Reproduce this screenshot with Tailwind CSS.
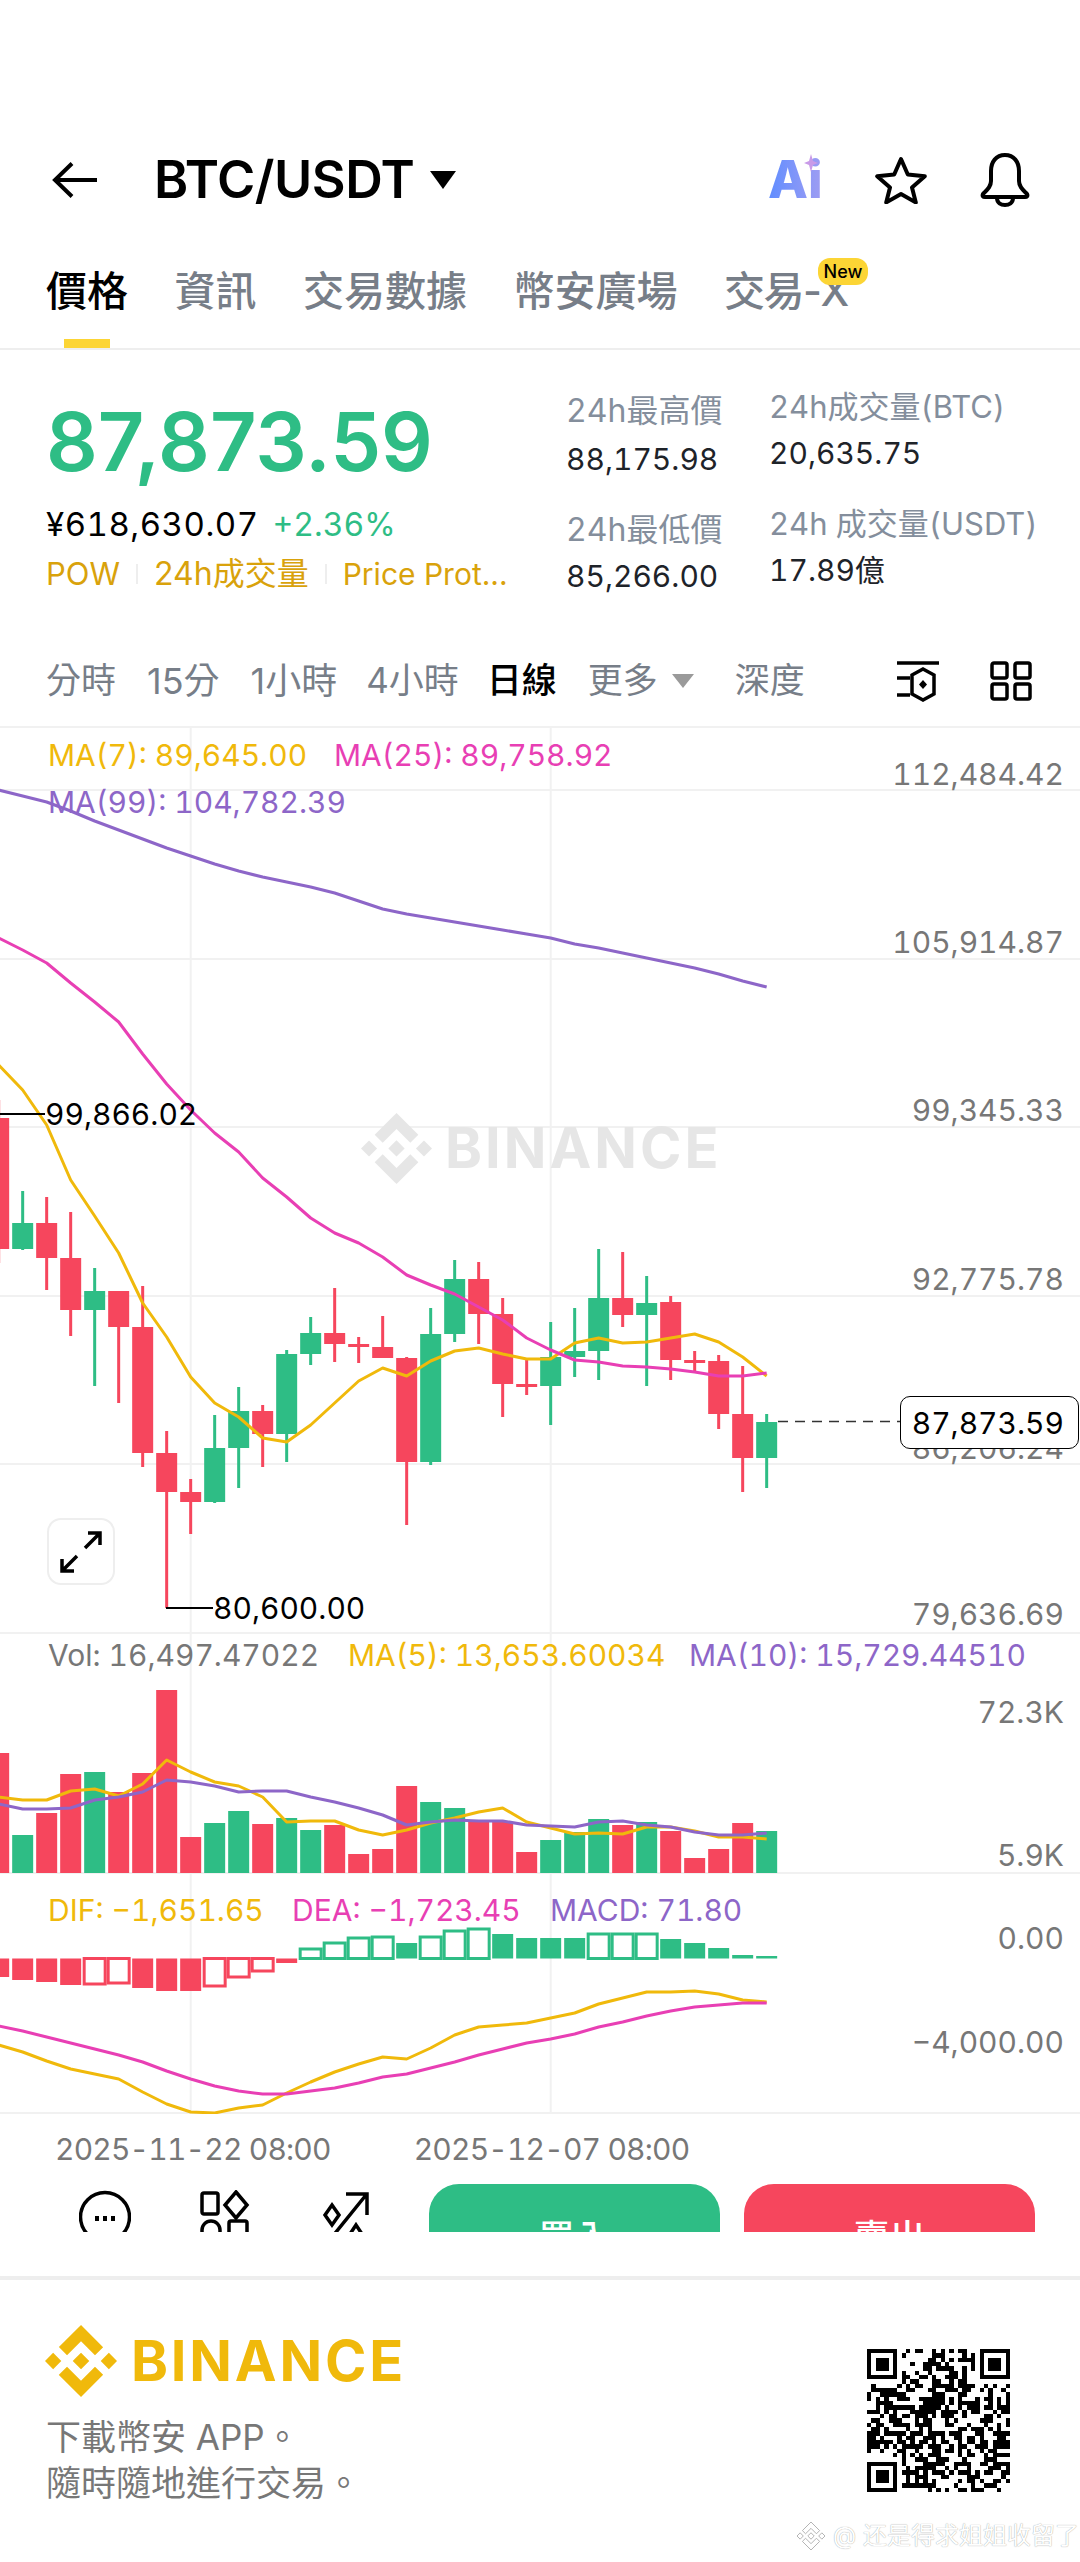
<!DOCTYPE html>
<html lang="zh-Hant">
<head>
    <meta charset="UTF-8">
    <meta name="viewport" content="width=device-width, initial-scale=1.0">
    <title>BTC/USDT</title>
    <script src="https://cdn.jsdelivr.net/npm/@tailwindcss/browser@4"></script>
</head>
<body class="bg-white">
<div class="w-[1080px] h-[2562px] relative overflow-hidden bg-white text-[#1e2329] font-[Inter,'Noto_Sans_CJK_TC',sans-serif]">

    <!-- Header -->
    <div class="h-[80px] mt-[140px] flex items-center pl-[52px]">
        <svg width="46" height="36" viewBox="0 0 46 36" fill="none" stroke="#000" stroke-width="4"><path d="M45 18H4M20 1.500L3 18l17 16.500"/></svg>
        <div class="ml-[56px] w-[258px] text-[52px] leading-[60px] font-semibold tracking-[-0.5px] text-black whitespace-nowrap">BTC/USDT</div>
        <svg class="ml-[17px]" width="28" height="18" viewBox="0 0 28 18"><path d="M1 0h26L14 18z" fill="#000"/></svg>
        <div class="relative ml-[311px] w-[54px] h-[44px]">
            <span class="absolute left-0 top-[-8px] text-[52px] leading-[60px] font-extrabold bg-linear-to-r from-[#5f8dff] to-[#9f9df2] bg-clip-text text-transparent">Ai</span>
            <svg class="absolute left-[36px] top-[-4px]" width="14" height="18" viewBox="0 0 14 18"><path d="M7 0l2 7 5 2-5 2-2 7-2-7-5-2 5-2z" fill="#c99be8"/></svg>
        </div>
        <svg class="ml-[53px]" width="52" height="48" viewBox="0 0 52 48" fill="none" stroke="#000" stroke-width="4" stroke-linejoin="round"><path d="M26 3l6.800 15.500 17 1.700-12.800 11.200 3.800 15-14.800-8.400-14.800 8.400 3.800-15L2.200 20.200l17-1.700z"/></svg>
        <svg class="ml-[52px]" width="52" height="54" viewBox="0 0 52 54" fill="none" stroke="#000" stroke-width="4" stroke-linejoin="round"><path d="M26 2c-9 0-14 7-14 16v10c0 6-4 9-8 13-1 2 0 3 2 3h40c2 0 3-1 2-3-4-4-8-7-8-13V18c0-9-5-16-14-16z"/><path d="M18 45c0 5 4 7 8 7s8-2 8-7"/></svg>
    </div>

    <!-- Tabs -->
    <div class="h-[130px] relative flex items-start pl-[46px] pt-[47px] gap-[46.500px] text-[41px] leading-[48px] font-medium text-[#777e88] border-b-[2px] border-[#eeeeee]">
        <span class="text-black">價格</span>
        <span>資訊</span>
        <span>交易數據</span>
        <span>幣安廣場</span>
        <span class="tracking-[-1.500px]">交易-X</span>
        <span class="absolute left-[818px] top-[38px] w-[50px] h-[27px] rounded-[12px] bg-[#fcd535] text-black text-[18px] leading-[27px] text-center">New</span>
        <span class="absolute left-[64px] bottom-0 w-[46px] h-[9px] bg-[#fcd535]"></span>
    </div>

    <!-- Price summary -->
    <div class="h-[290px] flex">
        <div class="w-[566px] pl-[46px] pt-[53px] shrink-0">
            <div class="text-[81px] leading-[78px] font-semibold text-[#2ebd85]">87,873.59</div>
            <div class="mt-[24px] h-[40px] flex items-center text-[32px] tabular-nums">
                <span class="text-black text-[33px] tracking-[0.5px]">¥618,630.07</span>
                <span class="ml-[14px] text-[#2ebd85]">+2.36%</span>
            </div>
            <div class="mt-[9px] h-[40px] flex items-center text-[31px] text-[#d9a20b] whitespace-nowrap">
                <span>POW</span>
                <span class="w-[2px] h-[20px] bg-[#eeeeee] ml-[16px]"></span>
                <span class="ml-[16px] text-[32px]">24h成交量</span>
                <span class="w-[2px] h-[20px] bg-[#eeeeee] ml-[16px]"></span>
                <span class="ml-[16px] text-[30px]">Price Prot...</span>
            </div>
        </div>
        <div class="w-[203px] pt-[37px] shrink-0 text-[30px] tabular-nums">
            <div class="h-[48px] leading-[48px] text-[32px] text-[#848e9c]">24h最高價</div>
            <div class="h-[71px] leading-[48px]">88,175.98</div>
            <div class="h-[46px] leading-[48px] text-[32px] text-[#848e9c]">24h最低價</div>
            <div class="leading-[48px]">85,266.00</div>
        </div>
        <div class="pt-[33px] text-[30px] tabular-nums">
            <div class="h-[46px] leading-[48px] text-[31px] text-[#848e9c] whitespace-nowrap">24h成交量(BTC)</div>
            <div class="h-[71px] leading-[48px]">20,635.75</div>
            <div class="h-[46px] leading-[48px] text-[31px] text-[#848e9c] whitespace-nowrap">24h 成交量(USDT)</div>
            <div class="leading-[48px]">17.89億</div>
        </div>
    </div>

    <!-- Interval row -->
    <div class="h-[86px] flex items-center pb-[5px] pl-[46px] pr-[48px] text-[35px] text-[#777e88]">
        <span>分時</span>
        <span class="ml-[31px] text-[36px]">15分</span>
        <span class="ml-[31px] text-[36px]">1小時</span>
        <span class="ml-[29px]">4小時</span>
        <span class="ml-[28px] text-black font-medium">日線</span>
        <span class="ml-[31px]">更多</span>
        <svg class="ml-[14px]" width="22" height="14" viewBox="0 0 22 14"><path d="M0 0h22L11 14z" fill="#9a9a9a"/></svg>
        <span class="ml-[41px]">深度</span>
        <svg class="ml-auto" width="44" height="42" viewBox="0 0 44 42" fill="none" stroke="#000" stroke-width="3.500"><path d="M0 3h42M0 18h13M0 35h13M26 9l11 6v19l-11 6-11-6V15z"/><path d="M26 20l4 4.500-4 4.500-4-4.500z" fill="#000" stroke="none"/></svg>
        <svg class="ml-[49px]" width="42" height="40" viewBox="0 0 42 40" fill="none" stroke="#000" stroke-width="3.500"><rect x="2" y="2" width="15" height="15" rx="2"/><rect x="25" y="2" width="15" height="15" rx="2"/><rect x="2" y="23" width="15" height="15" rx="2"/><rect x="25" y="23" width="15" height="15" rx="2"/></svg>
    </div>

    <!-- Chart -->
    <div class="relative h-[1388px] text-[30px] leading-[36px] whitespace-nowrap tabular-nums">
        <svg id="chart" class="absolute inset-0" width="1080" height="1388" viewBox="0 726 1080 1388"></svg>

        <!-- watermark -->
        <svg class="absolute left-[361px] top-[387px]" width="71" height="71" viewBox="0 0 126.610 126.610" fill="#e6e6e6"><path d="M38.730 53.200l24.590-24.580 24.600 24.600 14.300-14.310L63.320 0 24.430 38.900zM0 63.310L14.300 49l14.310 14.310-14.310 14.300zM38.730 73.410L63.320 98l24.600-24.600 14.310 14.290-38.900 38.910-38.910-38.880v-.03zM98 63.310L112.300 49l14.310 14.300-14.310 14.320zM77.830 63.300L63.320 48.780 52.590 59.510l-1.240 1.230-2.540 2.540 14.510 14.500 14.510-14.470z"/></svg>
        <div class="absolute left-[445px] top-[390px] text-[56px] leading-[64px] font-bold text-[#e6e6e6] tracking-[3px]">BINANCE</div>

        <!-- main legend -->
        <div class="absolute left-[48px] top-[11px] text-[#f0b90b]">MA(7): 89,645.00</div>
        <div class="absolute left-[334px] top-[11px] text-[#e83fb4]">MA(25): 89,758.92</div>
        <div class="absolute left-[48px] top-[58px] text-[#8d66c8]">MA(99): 104,782.39</div>

        <!-- price axis -->
        <div class="absolute right-[16px] top-[30px] text-[#777777]">112,484.42</div>
        <div class="absolute right-[16px] top-[198px] text-[#777777]">105,914.87</div>
        <div class="absolute right-[16px] top-[366px] text-[#777777]">99,345.33</div>
        <div class="absolute right-[16px] top-[535px] text-[#777777]">92,775.78</div>
        <div class="absolute right-[16px] top-[704px] text-[#777777]">86,206.24</div>
        <div class="absolute right-[16px] top-[870px] text-[#777777]">79,636.69</div>
        <div class="absolute left-[900px] top-[670px] w-[179px] h-[53px] border border-black rounded-[10px] bg-white text-black text-right pr-[14px] leading-[52px]">87,873.59</div>

        <div class="absolute left-[45px] top-[370px] text-black">99,866.02</div>
        <div class="absolute left-[213px] top-[864px] text-black">80,600.00</div>

        <!-- expand button -->
        <div class="absolute left-[47px] top-[792px] w-[68px] h-[67px] rounded-[14px] border-[2px] border-[#eeeeee] bg-white/80 flex items-center justify-center">
            <svg width="44" height="44" viewBox="0 0 44 44" fill="none" stroke="#000" stroke-width="3.500"><path d="M26 18L41 3M29 3h12v12M18 26L3 41M3 29v12h12"/></svg>
        </div>

        <!-- volume legend -->
        <div class="absolute left-[48px] top-[911px] text-[#777777]">Vol: 16,497.47022</div>
        <div class="absolute left-[348px] top-[911px] text-[#f0b90b]">MA(5): 13,653.60034</div>
        <div class="absolute left-[689px] top-[911px] text-[#8d66c8]">MA(10): 15,729.44510</div>
        <div class="absolute right-[16px] top-[968px] text-[#777777]">72.3K</div>
        <div class="absolute right-[16px] top-[1111px] text-[#777777]">5.9K</div>

        <!-- macd legend -->
        <div class="absolute left-[48px] top-[1166px] text-[#f0b90b]">DIF: −1,651.65</div>
        <div class="absolute left-[292px] top-[1166px] text-[#e83fb4]">DEA: −1,723.45</div>
        <div class="absolute left-[550px] top-[1166px] text-[#8d66c8]">MACD: 71.80</div>
        <div class="absolute right-[16px] top-[1194px] text-[#777777]">0.00</div>
        <div class="absolute right-[16px] top-[1298px] text-[#777777]">−4,000.00</div>
    </div>

    <!-- Dates -->
    <div class="h-[70px] flex items-center pl-[55px] gap-[83px] text-[30px] tabular-nums tracking-[-0.800px] text-[#777777] whitespace-nowrap">
        <span>2025-11-22 08:00</span>
        <span>2025-12-07 08:00</span>
    </div>

    <!-- Actions, cut off by the lower banner -->
    <div class="h-[48px] overflow-hidden relative">
        <svg class="absolute left-[79px] top-[6px]" width="52" height="60" viewBox="0 0 52 60" fill="none" stroke="#000" stroke-width="3.500"><circle cx="26" cy="27" r="24.500"/><path d="M16 26h4v5h-4zM24 26h4v5h-4zM32 26h4v5h-4z" fill="#000" stroke="none"/></svg>
        <svg class="absolute left-[200px] top-[6px]" width="50" height="60" viewBox="0 0 50 60" fill="none" stroke="#000" stroke-width="3.500"><rect x="2" y="3" width="16" height="21" rx="2"/><path d="M36 2l11 13-11 13-11-13z"/><path d="M2 50V40a9 9 0 0 1 18 0v10"/><rect x="29" y="31" width="18" height="24" rx="2"/></svg>
        <svg class="absolute left-[322px] top-[8px]" width="48" height="50" viewBox="0 0 48 50" fill="none" stroke="#000" stroke-width="3.500"><path d="M6 50L44 3M24 2h21v21"/><path d="M10 13l7 10-7 10-7-10zM34 33l6 9-6 9-6-9z"/></svg>
        <div class="absolute left-[429px] top-0 w-[291px] h-[108px] rounded-[30px] bg-[#2ebd85] text-white text-[36px] font-medium flex items-center justify-center">買入</div>
        <div class="absolute left-[744px] top-0 w-[291px] h-[108px] rounded-[30px] bg-[#f6465d] text-white text-[36px] font-medium flex items-center justify-center">賣出</div>
    </div>

    <!-- Download banner -->
    <div class="mt-[44px] h-[285px] border-t-[4px] border-[#eeeeee] flex justify-between pl-[45px] pr-[70px]">
        <div class="pt-[45px]">
            <div class="flex items-center h-[72px]">
                <svg width="72" height="72" viewBox="0 0 126.610 126.610" fill="#f0b90b"><path d="M38.730 53.200l24.590-24.580 24.600 24.600 14.300-14.310L63.320 0 24.430 38.900zM0 63.310L14.300 49l14.310 14.310-14.310 14.300zM38.730 73.410L63.320 98l24.600-24.600 14.310 14.290-38.900 38.910-38.910-38.880v-.03zM98 63.310L112.300 49l14.310 14.300-14.310 14.320zM77.830 63.300L63.320 48.780 52.590 59.510l-1.240 1.230-2.540 2.540 14.510 14.500 14.510-14.470z"/></svg>
                <span class="ml-[14px] text-[56px] leading-[64px] font-bold text-[#f0b90b] tracking-[2.800px]">BINANCE</span>
            </div>
            <div class="mt-[17px] pl-[1px] text-[35px] leading-[46px] text-[#777777]">下載幣安 APP。<br>隨時隨地進行交易。</div>
        </div>
        <svg id="qr" class="mt-[69px]" width="143" height="143" viewBox="0 0 33 33" shape-rendering="crispEdges"></svg>
    </div>

    <!-- Repost watermark -->
    <div class="absolute left-[797px] top-[2522px] flex items-center text-[24px] leading-[28px] text-white [text-shadow:0_0_1px_#8a8a8a] whitespace-nowrap">
        <svg width="28" height="28" viewBox="0 0 126.610 126.610" fill="#fff" stroke="#aaaaaa" stroke-width="4"><path d="M38.730 53.200l24.590-24.580 24.600 24.600 14.300-14.310L63.320 0 24.430 38.900zM0 63.310L14.300 49l14.310 14.310-14.310 14.300zM38.730 73.410L63.320 98l24.600-24.600 14.310 14.290-38.900 38.910-38.910-38.880v-.03zM98 63.310L112.300 49l14.310 14.300-14.310 14.320zM77.830 63.300L63.320 48.780 52.590 59.510l-1.240 1.230-2.540 2.540 14.510 14.500 14.510-14.470z"/></svg>
        <span class="ml-[8px]">@ 还是得求姐姐收留了</span>
    </div>
</div>

<script>
    const GREEN = '#2ebd85', RED = '#f6465d', YELLOW = '#f0b90b', PINK = '#e83fb4', PURPLE = '#8d66c8', GRID = '#f1f1f1';
    const xAt = i => -1.33 + i * 24;

    // high, body top, body bottom, low, colour
    const candles = [
        [1100, 1118, 1249, 1263, RED],
        [1191, 1223, 1249, 1250, GREEN], [1197, 1223, 1258, 1290, RED], [1212, 1258, 1310, 1336, RED],
        [1268, 1291, 1310, 1386, GREEN], [1291, 1291, 1327, 1403, RED], [1286, 1327, 1453, 1467, RED],
        [1431, 1453, 1492, 1608, RED], [1479, 1492, 1502, 1534, RED], [1415, 1448, 1502, 1503, GREEN],
        [1387, 1411, 1448, 1488, GREEN], [1405, 1411, 1434, 1467, RED], [1350, 1354, 1434, 1462, GREEN],
        [1317, 1333, 1354, 1365, GREEN], [1288, 1333, 1344, 1362, RED], [1337, 1344, 1347, 1363, RED],
        [1316, 1347, 1358, 1358, RED], [1357, 1358, 1462, 1525, RED], [1308, 1334, 1462, 1465, GREEN],
        [1260, 1279, 1334, 1342, GREEN], [1262, 1279, 1314, 1344, RED], [1298, 1314, 1384, 1417, RED],
        [1360, 1384, 1387, 1395, RED], [1322, 1357, 1386, 1425, GREEN], [1308, 1351, 1357, 1377, GREEN],
        [1249, 1298, 1351, 1380, GREEN], [1252, 1298, 1315, 1327, RED], [1276, 1303, 1315, 1386, GREEN],
        [1296, 1302, 1360, 1380, RED], [1351, 1360, 1363, 1371, RED], [1355, 1361, 1414, 1429, RED],
        [1366, 1414, 1458, 1492, RED], [1414, 1422, 1458, 1488, GREEN]
    ];

    const ma7 = [1065, 1090, 1125, 1180, 1216, 1253, 1303, 1337, 1377, 1403, 1417, 1438, 1442, 1425, 1403, 1381, 1368, 1376, 1361, 1351, 1348, 1354, 1359, 1359, 1343, 1338, 1343, 1342, 1338, 1334, 1342, 1357, 1376];
    const ma25 = [938, 950, 963, 983, 1002, 1022, 1054, 1084, 1110, 1133, 1152, 1178, 1197, 1218, 1233, 1243, 1257, 1275, 1285, 1294, 1307, 1320, 1338, 1350, 1360, 1362, 1366, 1367, 1369, 1372, 1376, 1376, 1373];
    const ma99 = [790, 796, 802, 811, 821, 830, 839, 848, 856, 864, 871, 877, 882, 887, 893, 901, 909, 914, 918, 922, 926, 930, 934, 938, 944, 948, 953, 958, 963, 968, 974, 981, 987];

    const vol = [1753, 1835, 1813, 1774, 1772, 1792, 1773, 1690, 1837, 1823, 1811, 1824, 1818, 1830, 1825, 1854, 1849, 1786, 1802, 1808, 1822, 1822, 1852, 1840, 1832, 1819, 1825, 1822, 1831, 1858, 1849, 1823, 1831];
    const volColor = [RED, GREEN, RED, RED, GREEN, RED, RED, RED, RED, GREEN, GREEN, RED, GREEN, GREEN, RED, RED, RED, RED, GREEN, GREEN, RED, RED, RED, GREEN, GREEN, GREEN, RED, GREEN, RED, RED, RED, RED, GREEN];
    const volMa5 = [1797, 1800, 1800, 1791, 1789, 1796, 1784, 1760, 1772, 1782, 1786, 1797, 1822, 1821, 1821, 1830, 1835, 1830, 1823, 1818, 1812, 1808, 1822, 1828, 1834, 1833, 1834, 1827, 1827, 1831, 1837, 1837, 1839];
    const volMa10 = [1804, 1809, 1809, 1808, 1800, 1797, 1792, 1780, 1782, 1786, 1792, 1791, 1791, 1797, 1802, 1808, 1815, 1825, 1822, 1820, 1821, 1821, 1825, 1826, 1827, 1822, 1821, 1825, 1827, 1832, 1835, 1835, 1833];

    // histogram end value, hollow flag; the bars hang from the zero line at 1958
    const macd = [
        [1977, 0], [1980, 0], [1982, 0], [1985, 0], [1984, 1], [1983, 1], [1988, 0], [1991, 0], [1991, 0], [1986, 1], [1977, 1], [1971, 1], [1963, 0],
        [1949, 1], [1943, 1], [1938, 1], [1937, 1], [1943, 0], [1937, 1], [1931, 1], [1929, 1], [1934, 0], [1938, 0], [1938, 0], [1938, 0],
        [1934, 1], [1934, 1], [1934, 1], [1939, 0], [1943, 0], [1948, 0], [1955, 0], [1956, 0]
    ];
    const dif = [2045, 2052, 2061, 2069, 2074, 2079, 2092, 2104, 2112, 2113, 2108, 2105, 2093, 2082, 2072, 2064, 2057, 2059, 2048, 2035, 2027, 2025, 2023, 2018, 2013, 2004, 1998, 1992, 1992, 1991, 1994, 2000, 2002];
    const dea = [2026, 2031, 2037, 2043, 2049, 2055, 2062, 2071, 2079, 2086, 2091, 2094, 2094, 2091, 2088, 2083, 2077, 2074, 2068, 2062, 2055, 2049, 2043, 2039, 2034, 2027, 2022, 2016, 2011, 2007, 2005, 2003, 2003];

    const rect = (x, y, w, h, fill) => `<rect x="${x}" y="${y}" width="${w}" height="${h}" fill="${fill}"/>`;
    const line = (pts, color, width) => `<polyline fill="none" stroke="${color}" stroke-width="${width}" stroke-linejoin="round" points="${pts.map((y, i) => xAt(i) + ',' + y).join(' ')}"/>`;

    let out = '';

    // grid
    [727, 790, 959, 1127, 1296, 1464, 1633, 1873, 2113].forEach(y => { out += rect(0, y - 1, 1080, 2, GRID); });
    [190.67, 550.67].forEach(x => { out += rect(x - 1, 726, 2, 1387, GRID); });

    // candles
    candles.forEach((c, i) => {
        const x = xAt(i);
        out += rect(x - 1.5, c[0], 3, c[3] - c[0], c[4]);
        out += rect(x - 10.5, c[1], 21, c[2] - c[1], c[4]);
    });
    out += line(ma7, YELLOW, 3) + line(ma25, PINK, 3) + line(ma99, PURPLE, 3);

    // guide lines
    out += rect(0, 1113, 45, 2, '#000') + rect(166, 1607, 47, 2, '#000');
    out += `<path d="M778 1421.500H900" stroke="#333" stroke-width="1.500" stroke-dasharray="10 7"/>`;

    // volume
    vol.forEach((top, i) => { out += rect(xAt(i) - 10.5, top, 21, 1873 - top, volColor[i]); });
    out += line(volMa5, YELLOW, 3) + line(volMa10, PURPLE, 3);

    // macd
    macd.forEach((m, i) => {
        const x = xAt(i), color = i < 13 ? RED : GREEN;
        const y = Math.min(m[0], 1958.5), h = Math.abs(m[0] - 1958.5);
        if (m[1]) out += `<rect x="${x - 10.5}" y="${y}" width="21" height="${h}" fill="#fff" stroke="${color}" stroke-width="3"/>`;
        else out += rect(x - 10.5, y, 21, h, color);
    });
    out += line(dif, YELLOW, 3) + line(dea, PINK, 3);

    document.getElementById('chart').innerHTML = out;

    // QR code: three finders and a fixed pseudo random fill
    let seed = 20251207, qr = '';
    const rand = () => { seed = (seed * 1103515245 + 12345) & 0x7fffffff; return (seed >> 12) % 100; };
    const finder = (x, y) => `<path d="M${x} ${y}h7v7h-7z" fill="#000"/><path d="M${x + 1} ${y + 1}h5v5h-5z" fill="#fff"/><path d="M${x + 2} ${y + 2}h3v3h-3z" fill="#000"/>`;
    for (let r = 0; r < 33; r++) {
        for (let c = 0; c < 33; c++) {
            const inFinder = (r < 8 && c < 8) || (r < 8 && c > 24) || (r > 24 && c < 8);
            if (!inFinder && rand() < 52) qr += `<rect x="${c}" y="${r}" width="1" height="1"/>`;
        }
    }
    document.getElementById('qr').innerHTML = qr + finder(0, 0) + finder(26, 0) + finder(0, 26);
</script>
</body>
</html>
